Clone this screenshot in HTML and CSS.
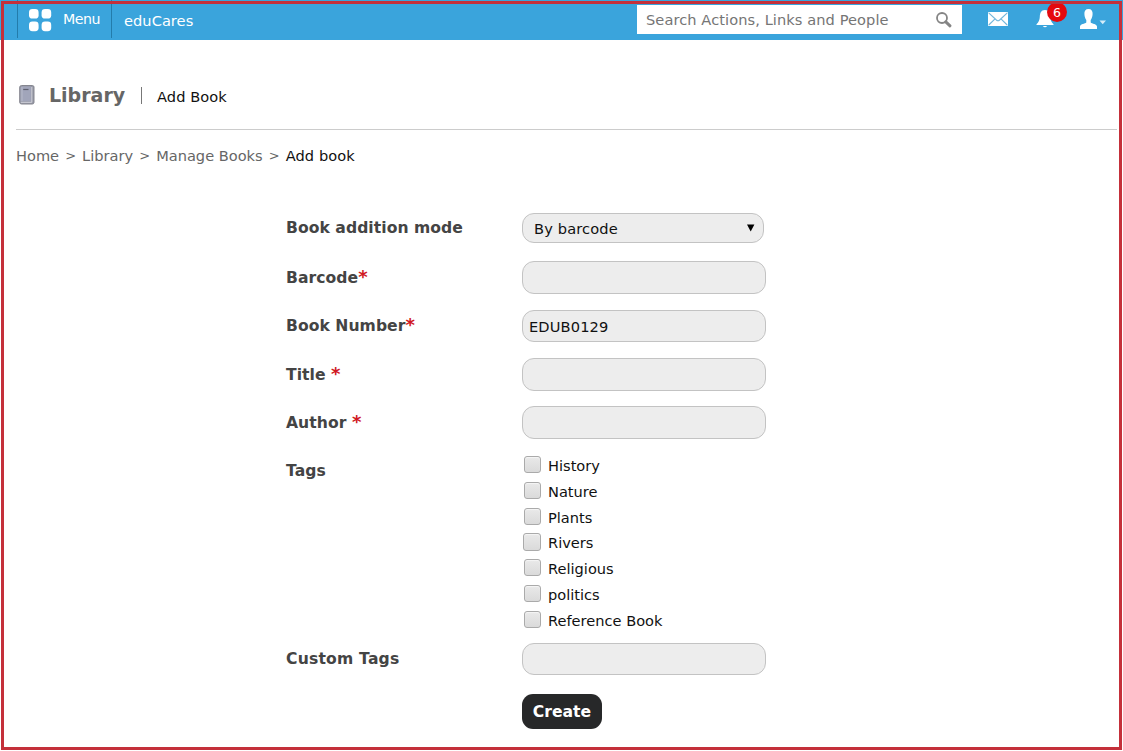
FILE: index.html
```html
<!DOCTYPE html>
<html lang="en">
<head>
<meta charset="utf-8">
<title>Library - Add Book</title>
<link rel="stylesheet" href="styles.css">
</head>
<body>
<div class="page">
  <header class="topbar">
    <a class="menu">
      <svg class="menu-icon" width="23" height="23" viewBox="0 0 23 23"><g fill="#fff"><rect x="0" y="0" width="9.6" height="9.6" rx="3.4"/><rect x="12.6" y="0" width="9.6" height="9.6" rx="3.4"/><rect x="0" y="12.6" width="9.6" height="9.6" rx="3.4"/><rect x="12.6" y="12.6" width="9.6" height="9.6" rx="3.4"/></g></svg>
      <span class="menu-text">Menu</span>
    </a>
    <span class="brand">eduCares</span>
    <div class="search">
      <span class="search-text">Search Actions, Links and People</span>
      <svg class="search-icon" width="18" height="18" viewBox="0 0 18 18"><circle cx="7" cy="7" r="5" fill="none" stroke="#858585" stroke-width="1.8"/><path d="M10.8 10.8L15 14.8" stroke="#858585" stroke-width="3" stroke-linecap="round"/></svg>
    </div>
    <svg class="mail" width="20" height="14" viewBox="0 0 20 14"><rect width="20" height="14" rx=".8" fill="#fff"/><path d="M.7.8L8.4 8Q10 9.4 11.6 8L19.3.8M.8 13L7 6.8M19.2 13L13 6.8" fill="none" stroke="#72b7dc" stroke-width="1.1"/></svg>
    <div class="alerts">
      <svg width="18" height="18" viewBox="0 0 18 18"><path d="M9 0C5 .2 4 3 3.8 7Q3.6 11.5.5 14.2V15H17.5V14.2Q14.4 11.5 14.2 7C14 3 13 .2 9 0Z" fill="#fff"/><path d="M6.8 16H11.2Q9 18.6 6.8 16Z" fill="#fff"/></svg>
      <span class="badge">6</span>
    </div>
    <svg class="user" width="26" height="20" viewBox="0 0 26 20"><path d="M8.5 0C5.5 0 4.2 2 4.4 5C4.5 8 5.4 9.6 6.3 11V13.6C5 15 .5 14.8 0 17.6V20H17V17.6C16.5 14.8 12 15 10.7 13.6V11C11.6 9.6 12.5 8 12.6 5C12.8 2 11.5 0 8.5 0Z" fill="#fff"/><path d="M19.5 11.5H26L22.7 15.2Z" fill="#d5edf9"/></svg>
  </header>

  <div class="heading">
    <svg class="book" width="16" height="20" viewBox="0 0 16 20"><path d="M2.5.5H13.5Q15 .7 15 2V17.5Q14.8 19 13.3 19H2.5Q.7 19 .7 17.2V2.2Q.8.6 2.5.5Z" fill="#9698a6" stroke="#85868f"/><path d="M3 1.5H11.8V16.2H1.6V3Q1.7 1.7 3 1.5Z" fill="#a1a5ba"/><path d="M1.8 17.3H12.8V2" fill="none" stroke="#d1d2db"/><path d="M4.2 4.5H9.5" stroke="#5f6170" stroke-width="1.2"/><path d="M3 2V16" stroke="#b7bac9"/></svg>
    <h1 class="title">Library</h1>
    <span class="divider"></span>
    <span class="subtitle">Add Book</span>
  </div>

  <nav class="crumbs"><span>Home</span><i>&gt;</i><span>Library</span><i>&gt;</i><span>Manage Books</span><i>&gt;</i><span class="current">Add book</span></nav>

  <form class="form">
    <label class="label l-mode">Book addition mode</label>
    <div class="field select"><span>By barcode</span><svg width="8" height="8" viewBox="0 0 8 8"><path d="M0 .5H7.4L3.7 7.5Z" fill="#000"/></svg></div>
    <label class="label">Barcode<b>*</b></label>
    <div class="field"></div>
    <label class="label l-number">Book Number<b>*</b></label>
    <div class="field short">EDUB0129</div>
    <label class="label">Title <b>*</b></label>
    <div class="field"></div>
    <label class="label">Author <b>*</b></label>
    <div class="field"></div>
    <label class="label">Tags</label>
    <div class="tags">
      <label class="tag"><span class="box"></span><span class="tag-text">History</span></label>
      <label class="tag"><span class="box"></span><span class="tag-text">Nature</span></label>
      <label class="tag"><span class="box"></span><span class="tag-text">Plants</span></label>
      <label class="tag"><span class="box large"></span><span class="tag-text">Rivers</span></label>
      <label class="tag"><span class="box"></span><span class="tag-text">Religious</span></label>
      <label class="tag"><span class="box"></span><span class="tag-text">politics</span></label>
      <label class="tag"><span class="box"></span><span class="tag-text">Reference Book</span></label>
    </div>
    <label class="label l-custom">Custom Tags</label>
    <div class="field short"></div>
    <button class="create" type="button">Create</button>
  </form>
  <div class="frame"></div>
</div>
</body>
</html>
```
FILE: styles.css
```css
* { box-sizing: border-box; }
body { margin: 0; background: #fff; font-family: "DejaVu Sans", Verdana, sans-serif; font-size: 14.6px; color: #111; }
.page { position: relative; width: 1123px; height: 751px; overflow: hidden; }
svg { display: block; flex: none; }
.topbar { display: flex; height: 40px; background: #3aa4dc; color: #fff; }
.menu { display: flex; width: 95px; height: 38px; margin-left: 17px; padding-left: 11px; border-left: 1px solid #237cab; border-right: 1px solid #237cab; }
.menu-icon { margin-top: 9px; }
.menu-text { margin: 10px 0 0 11px; line-height: 18px; font-size: 14.2px; letter-spacing: -.5px; }
.brand { width: 513px; margin: 12px 0 0 12px; line-height: 18px; font-size: 14.6px; letter-spacing: .05px; }
.search { display: flex; justify-content: space-between; width: 325px; height: 29px; margin-top: 5px; padding: 6px 9px 0 9px; background: #fff; color: #757575; line-height: 18px; }
.search-text { white-space: nowrap; letter-spacing: .08px; }
.mail { margin: 12px 0 0 26px; }
.alerts { position: relative; margin: 10px 0 0 28px; }
.badge { position: absolute; left: 11px; top: -8px; width: 20px; height: 20px; border-radius: 50%; background: #e5090e; font-size: 12.5px; line-height: 21px; text-align: center; }
.user { margin: 9px 0 0 26px; }
.heading { display: flex; height: 90px; margin: 0 6px 0 16px; border-bottom: 1px solid #ccc; }
.book { margin: 45px 0 0 3px; }
.title { margin: 43px 0 0 14px; width: 77px; font-size: 19px; line-height: 24px; font-weight: bold; color: #666; }
.divider { width: 1px; height: 17px; margin: 47px 15px 0 15px; background: #777; }
.subtitle { margin-top: 47px; line-height: 20px; letter-spacing: .08px; }
.crumbs { display: flex; height: 20px; margin: 16px 0 0 16px; line-height: 20px; color: #666; }
.crumbs i { width: 23px; font-style: normal; font-size: 13px; text-align: center; }
.crumbs .current { color: #111; letter-spacing: .08px; }
.form { display: grid; grid-template-columns: 236px 244px; grid-template-rows: 48px 49px 48px 48px 48px 189px 51px 35px; margin: 47px 0 0 286px; }
.label { padding-top: 7px; line-height: 20px; font-size: 15.6px; letter-spacing: .05px; font-weight: bold; color: #444; white-space: nowrap; }
.l-mode { padding-top: 5px; }
.l-number, .l-custom { padding-top: 6px; }
.l-custom { letter-spacing: .2px; }
.label b { font-size: 18px; line-height: 18px; color: #d01823; }
.field { height: 33px; padding: 0 6px; border: 1px solid #c3c3c3; border-radius: 12px; background: #ededed; line-height: 31px; letter-spacing: .15px; }
.short { height: 32px; }
.select { display: flex; justify-content: space-between; align-items: center; width: 242px; height: 30px; padding: 0 8px 0 11px; line-height: 29px; }
.tags { padding-top: 1px; }
.tag { display: flex; height: 25.8px; line-height: 20px; }
.tag-text { padding-top: 1px; }
.box { width: 17px; height: 17px; margin: 1px 7px 0 2px; border: 1px solid #aaa; border-radius: 3px; background: linear-gradient(#e9e9e9, #dadada); box-shadow: inset 0 1px 1px #f5f5f5; }
.large { width: 18px; height: 18px; margin-left: 1px; }
.create { grid-column: 2; width: 80px; height: 35px; padding: 1px 0 0; border: 0; border-radius: 11px; background: #272829; color: #fff; font: bold 15.6px "DejaVu Sans", Verdana, sans-serif; }
.frame { position: absolute; inset: 1px; border: 3px solid #c4303a; pointer-events: none; }
```
